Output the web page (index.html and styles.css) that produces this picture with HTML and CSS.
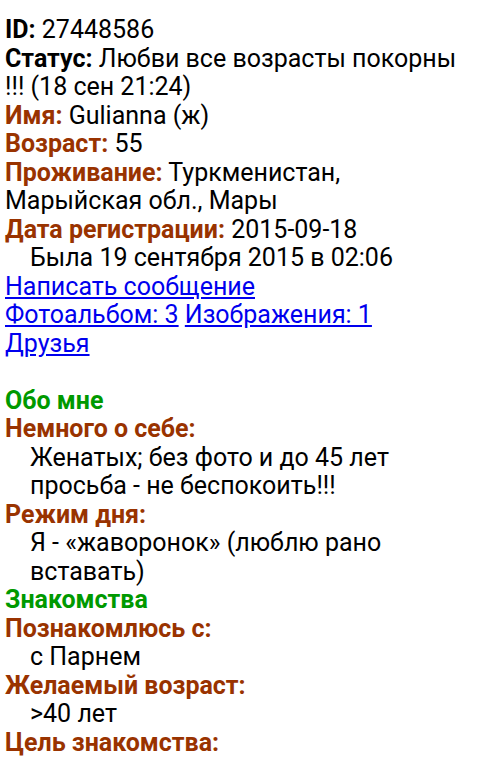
FILE: index.html
```html
<!DOCTYPE html>
<html>
<head>
<meta charset="utf-8">
<link rel="stylesheet" href="styles.css">
</head>
<body>
<div class="page">
  <div class="row"><b class="k">ID:</b> 27448586</div>
  <div class="row"><b class="k">Статус:</b> Любви все возрасты покорны !!! (18 сен 21:24)</div>
  <div class="row"><b class="lbl">Имя:</b> Gulianna (ж)</div>
  <div class="row"><b class="lbl">Возраст:</b> 55</div>
  <div class="row"><b class="lbl">Проживание:</b> Туркменистан, Марыйская обл., Мары</div>
  <div class="row"><b class="lbl">Дата регистрации:</b> 2015-09-18</div>
  <div class="ind">Была 19 сентября 2015 в 02:06</div>
  <div class="row"><a href="#">Написать сообщение</a></div>
  <div class="row"><a href="#">Фотоальбом: 3</a> <a href="#">Изображения: 1</a></div>
  <div class="row"><a href="#">Друзья</a></div>
  <div class="gap"></div>
  <div class="sec">Обо мне</div>
  <div class="lbl">Немного о себе:</div>
  <div class="ind">Женатых; без фото и до 45 лет просьба - не беспокоить!!!</div>
  <div class="lbl">Режим дня:</div>
  <div class="ind">Я - «жаворонок» (люблю рано вставать)</div>
  <div class="sec">Знакомства</div>
  <div class="lbl">Познакомлюсь с:</div>
  <div class="ind">с Парнем</div>
  <div class="lbl">Желаемый возраст:</div>
  <div class="ind">&gt;40 лет</div>
  <div class="lbl">Цель знакомства:</div>
</div>
</body>
</html>
```
FILE: styles.css
```css
html, body {
  margin: 0;
  padding: 0;
  background: #ffffff;
}
body {
  font-family: Roboto, "Noto Sans", sans-serif;
  font-size: 25px;
  line-height: 28.5px;
  color: #000000;
}
.page {
  padding: 16px 5px 0 5px;
}
.k {
  font-weight: bold;
  color: #000000;
}
.lbl {
  font-weight: bold;
  color: #993300;
}
.sec {
  font-weight: bold;
  color: #009900;
}
.ind {
  padding-left: 25px;
}
.gap {
  height: 28.5px;
}
a {
  color: #0000ee;
  text-decoration: underline;
}
```
